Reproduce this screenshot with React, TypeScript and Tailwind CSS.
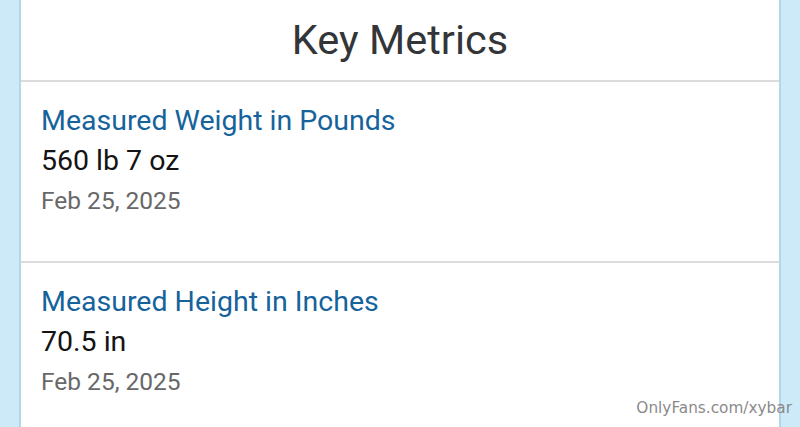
import React from "react";

const metrics = [
  { title: "Measured Weight in Pounds", value: "560 lb 7 oz", date: "Feb 25, 2025" },
  { title: "Measured Height in Inches", value: "70.5 in", date: "Feb 25, 2025" },
];

export default function App() {
  return (
    <div
      className="relative w-[800px] h-[427px] overflow-hidden bg-[#cdeaf8] px-[19px]"
      style={{ fontFamily: "Roboto, 'Noto Sans', sans-serif" }}
    >
      <div className="h-full bg-white border-x-2 border-[#b3d6e8]">
        <div className="h-[80px] flex items-center justify-center text-[41.5px] text-[#333538]">
          Key Metrics
        </div>
        {metrics.map((m, i) => (
          <div key={i} className="border-t-2 border-[#dcdcdc] pt-[19px] pb-[40px] px-[20px]">
            <div className="h-[40px] leading-[40px] text-[28.5px] text-[#16639c]">{m.title}</div>
            <div className="h-[40px] leading-[40px] text-[28.5px] text-[#141414]">{m.value}</div>
            <div className="h-[40px] leading-[40px] text-[24.5px] text-[#686868]">{m.date}</div>
          </div>
        ))}
      </div>
      <div
        className="absolute right-[8px] bottom-[7px] text-[15.3px] text-[#8a8a8a]"
        style={{ fontFamily: "'DejaVu Sans', sans-serif" }}
      >
        OnlyFans.com/xybar
      </div>
    </div>
  );
}
